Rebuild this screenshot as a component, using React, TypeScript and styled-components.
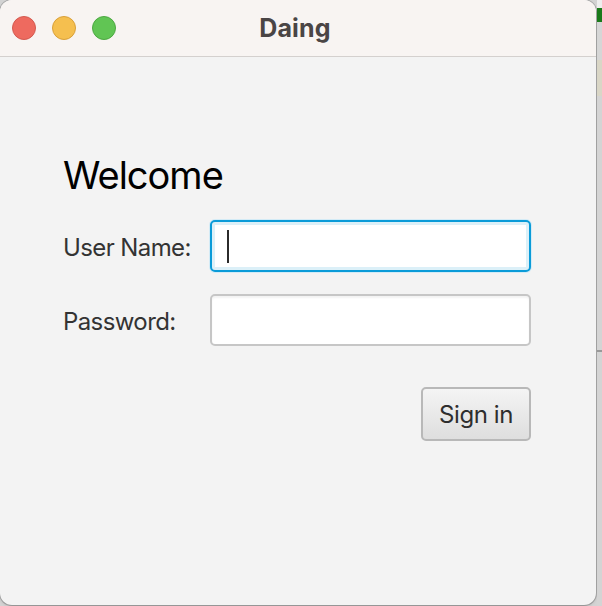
import React from "react";
import styled, { createGlobalStyle } from "styled-components";

const Global = createGlobalStyle`
  html, body { margin: 0; padding: 0; }
  body {
    width: 602px;
    height: 606px;
    overflow: hidden;
    background: #d3d3d3;
    font-family: Inter, "Noto Sans", "Liberation Sans", sans-serif;
  }
`;

const Desktop = styled.div`
  display: flex;
  width: 602px;
  height: 606px;
`;

const Window = styled.div`
  width: 596px;
  height: 605px;
  flex: none;
  display: flex;
  flex-direction: column;
  background: #f3f3f3;
  border-radius: 12px;
  overflow: hidden;
  box-shadow: 0 0 0 1px rgba(0, 0, 0, 0.18), 0 1px 3px rgba(0, 0, 0, 0.2);
`;

const TitleBar = styled.div`
  position: relative;
  height: 56px;
  flex: none;
  display: flex;
  align-items: center;
  padding-left: 12px;
  gap: 16px;
  background: #f8f4f2;
  border-bottom: 1px solid #d4d0ce;
`;

const Light = styled.span<{ $fill: string; $edge: string }>`
  width: 24px;
  height: 24px;
  border-radius: 50%;
  background: ${(p) => p.$fill};
  border: 0.5px solid ${(p) => p.$edge};
  box-sizing: border-box;
`;

const Title = styled.div`
  position: absolute;
  left: 0;
  right: 0;
  top: 0;
  bottom: 0;
  display: flex;
  align-items: center;
  justify-content: center;
  padding-right: 6px;
  font-size: 25px;
  font-weight: 700;
  letter-spacing: 0.2px;
  color: #4a4545;
  pointer-events: none;
`;

const Content = styled.div`
  padding: 95px 0 0 63px;
  display: grid;
  grid-template-columns: 147px 321px;
  align-items: center;
  row-gap: 22px;
`;

const Heading = styled.div`
  grid-column: 1 / span 2;
  font-size: 38px;
  line-height: 46px;
  color: #000;
  letter-spacing: -1px;
`;

const Label = styled.div`
  font-size: 24px;
  color: #333;
  letter-spacing: -0.6px;
  padding-top: 3px;
`;

const Field = styled.div<{ $focused?: boolean }>`
  position: relative;
  height: 52px;
  box-sizing: border-box;
  background: #fff;
  border-radius: 5px;
  border: ${(p) => (p.$focused ? "2px solid #0a9bd8" : "2px solid #c6c6c6")};
  box-shadow: ${(p) =>
    p.$focused
      ? "inset 0 0 0 3px #dcf0f8, 0 0 0 1px #d3ebf6"
      : "inset 0 2px 2px rgba(0,0,0,0.05)"};
`;

const Caret = styled.span`
  position: absolute;
  left: 15px;
  top: 8px;
  width: 2px;
  height: 33px;
  background: #2b2b2b;
`;

const ButtonRow = styled.div`
  grid-column: 2;
  display: flex;
  justify-content: flex-end;
  margin-top: 19px;
`;

const Button = styled.button`
  width: 110px;
  height: 54px;
  box-sizing: border-box;
  border: 2px solid #b8b8b8;
  border-radius: 5px;
  background: linear-gradient(#f4f4f4, #dedede);
  font-family: inherit;
  font-size: 24px;
  color: #2e2e2e;
  letter-spacing: -0.4px;
  padding: 0;
`;

const Strip = styled.div`
  flex: 1;
  display: flex;
  flex-direction: column;
  padding-left: 1px;
`;

const StripBlock = styled.div<{ $h: number; $bg: string }>`
  height: ${(p) => p.$h}px;
  flex: none;
  background: ${(p) => p.$bg};
`;

export default function App() {
  return (
    <>
      <Global />
      <Desktop>
        <Window>
          <TitleBar>
            <Light $fill="#ee6a5f" $edge="#d35a50" />
            <Light $fill="#f5bf4f" $edge="#d9a03a" />
            <Light $fill="#61c554" $edge="#4da842" />
            <Title>Daing</Title>
          </TitleBar>
          <Content>
            <Heading>Welcome</Heading>
            <Label>User Name:</Label>
            <Field $focused>
              <Caret />
            </Field>
            <Label>Password:</Label>
            <Field />
            <ButtonRow>
              <Button>Sign in</Button>
            </ButtonRow>
          </Content>
        </Window>
        <Strip>
          <StripBlock $h={8} $bg="#eeeeee" />
          <StripBlock $h={14} $bg="#1a7a1a" />
          <StripBlock $h={38} $bg="#d6d6d6" />
          <StripBlock $h={36} $bg="#d9d6c6" />
          <StripBlock $h={254} $bg="#d4d4d4" />
          <StripBlock $h={2} $bg="#999999" />
          <StripBlock $h={254} $bg="#d4d4d4" />
        </Strip>
      </Desktop>
    </>
  );
}
